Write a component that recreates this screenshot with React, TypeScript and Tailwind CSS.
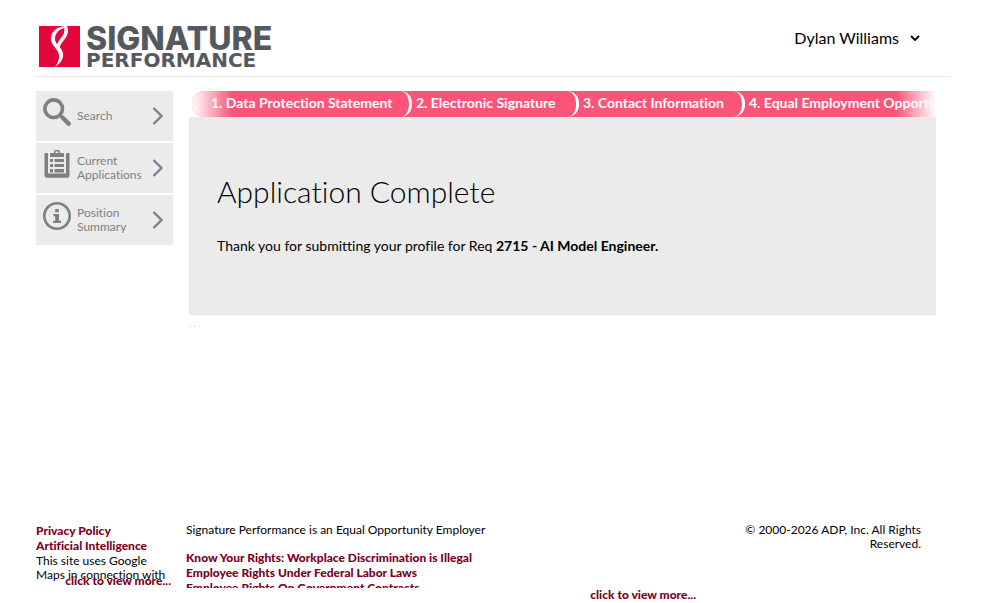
import React from 'react';

const linkClass = 'font-black text-[#7d0022] hover:underline';

const ChevronRight = () => (
  <svg className="h-5 w-3 shrink-0" viewBox="0 0 12 20" fill="none" stroke="#7b8090" strokeWidth="2.4">
    <path d="M1.5 2l8 8-8 8" />
  </svg>
);

const SearchIcon = () => (
  <svg className="h-7 w-7" viewBox="0 0 28 28" fill="none" stroke="#808080">
    <circle cx="10.7" cy="10.7" r="8.8" strokeWidth="3.6" />
    <path d="M17 17l3 3" strokeWidth="3" />
    <path d="M19.5 19.5l6.2 6.2" strokeWidth="4.4" strokeLinecap="round" />
  </svg>
);

const ClipboardIcon = () => (
  <svg className="h-7 w-7" viewBox="0 0 28 28" fill="#808080">
    <path d="M1.5 3H5v20.5h18V3h3.5v22.2a2.5 2.5 0 0 1-2.5 2.5H4a2.5 2.5 0 0 1-2.5-2.5z" />
    <path fillRule="evenodd" d="M7 7V3h4V1.5Q11 0 12.5 0h3Q17 0 17 1.5V3h4v4zM12.5 3h3V1.5h-3z" />
    <path d="M7 9h3v3H7zM11.5 9H21v3h-9.5zM7 14h3v3H7zM11.5 14H21v3h-9.5zM7 19h3v3.500H7zM11.5 19H21v3.500h-9.5z" />
  </svg>
);

const InfoIcon = () => (
  <svg className="h-7 w-7" viewBox="0 0 28 28" fill="#808080">
    <circle cx="14" cy="14" r="12.7" fill="none" stroke="#808080" strokeWidth="2.6" />
    <path d="M12.2 7h3.6v3.2h-3.6zM10.5 12h5.5v6.8h2V21h-8v-2.2h2.2v-4.6h-1.7z" />
  </svg>
);

const menuItems = [
  { label: 'Search', icon: <SearchIcon /> },
  { label: 'Current Applications', icon: <ClipboardIcon /> },
  { label: 'Position Summary', icon: <InfoIcon /> },
];

const Logo = () => (
  <a href="#home" aria-label="Signature Performance" className="flex items-start gap-1.5 pl-[3px]">
    <svg className="h-[41px] w-[41px]" viewBox="0 0 41 41">
      <path d="M0 0h41v41H0z" fill="#e4063a" />
      <path
        d="M28 0C17 0 11 7 12 14c1 6 7 9 8 15 .5 4-1 8-4 12 6-4 9-9 8-14-1-6-8-8-8-14 0-6 4-10 10-11z"
        fill="#fff"
      />
      <path d="M25 1c1 5 0 7-3 11-2 3-4 5-4 7l3 3c0-4 2-5 4-8 4-5 5-9 3-14z" fill="#fff" />
    </svg>
    <span className="flex flex-col font-['Inter',sans-serif] text-[#54585f]">
      <span className="text-[32px] leading-[26px] font-extrabold">SIGNATURE</span>
      <span className="font-['DejaVu_Sans',sans-serif] text-[20px] leading-4 font-bold">PERFORMANCE</span>
    </span>
  </a>
);

const Header = () => (
  <header className="flex h-[77px] items-start justify-between border-b border-[#e8e8e8] pt-[26px] pr-[30px]">
    <Logo />
    <button type="button" className="flex items-center gap-2.5 text-[16px] leading-6">
      Dylan Williams
      <svg className="h-3 w-3" viewBox="0 0 12 12" fill="none" stroke="#000" strokeWidth="1.8">
        <path d="M2 4l4 4 4-4" />
      </svg>
    </button>
  </header>
);

const Sidebar = () => (
  <nav aria-label="Main" className="flex w-[137px] shrink-0 flex-col gap-0.5">
    {menuItems.map((item) => (
      <a key={item.label} href="#menu" className="flex h-[50px] items-center bg-[#ebebeb] pr-[9px] pl-[7px] text-[#808080]">
        <span className="pb-2">{item.icon}</span>
        <span className="ml-1.5 flex-1 text-[12px] leading-[14px]">{item.label}</span>
        <ChevronRight />
      </a>
    ))}
  </nav>
);

const Steps = () => (
  <div className="relative ml-[3px] overflow-hidden rounded-l-[13px] bg-[#fa5478]">
    <ol className="flex text-[14px] leading-6 font-bold whitespace-nowrap text-white">
      <li className="w-[220px] shrink-0 rounded-r-[12px] border-r-[3px] border-white pb-0.5 pl-[19px]">1. Data Protection Statement</li>
      <li className="w-[167px] shrink-0 rounded-r-[12px] border-r-[3px] border-white pb-0.5 pl-1">2. Electronic Signature</li>
      <li className="w-[166px] shrink-0 rounded-r-[12px] border-r-[3px] border-white pb-0.5 pl-1">3. Contact Information</li>
      <li className="shrink-0 pb-0.5 pl-1">4. Equal Employment Opportunity</li>
    </ol>
    <div className="absolute inset-y-0 left-0 w-10 bg-gradient-to-r from-white to-transparent" />
    <div className="absolute inset-y-0 right-0 w-10 bg-gradient-to-l from-white to-transparent" />
  </div>
);

const Footer = () => (
  <footer className="mt-[190px] flex items-start text-[12px] leading-[14px]">
    <div className="relative h-[65px] w-[135px] shrink-0">
      <div className="h-[58px] overflow-hidden">
        <a href="#privacy" className={`block leading-[15px] ${linkClass}`}>Privacy Policy</a>
        <a href="#ai" className={`block leading-[15px] ${linkClass}`}>Artificial Intelligence</a>
        <p className="pt-px">This site uses Google Maps in connection with</p>
      </div>
      <a href="#more" className={`absolute right-0 bottom-0 whitespace-nowrap ${linkClass}`}>click to view more...</a>
    </div>
    <div className="ml-[15px] w-[510px]">
      <div className="h-[65px] overflow-hidden">
        <p>Signature Performance is an Equal Opportunity Employer</p>
        <ul className="mt-[13px] leading-[15px]">
          <li><a href="#rights" className={linkClass}>Know Your Rights: Workplace Discrimination is Illegal</a></li>
          <li><a href="#labor" className={linkClass}>Employee Rights Under Federal Labor Laws</a></li>
          <li><a href="#contracts" className={linkClass}>Employee Rights On Government Contracts</a></li>
        </ul>
      </div>
      <a href="#more-rights" className={`block text-right ${linkClass}`}>click to view more...</a>
    </div>
    <p className="ml-auto w-[220px] pr-[30px] text-right">© 2000-2026 ADP, Inc. All Rights Reserved.</p>
  </footer>
);

const App: React.FC = () => {
  return (
    <div className="bg-white px-9 font-['Lato',sans-serif] text-black [font-variant-ligatures:none]">
      <Header />
      <div className="mt-3.5 flex items-start gap-4">
        <Sidebar />
        <main className="min-w-0 flex-1 pr-[15px]">
          <Steps />
          <section className="h-[198px] bg-[#ebebeb] px-7 pt-14">
            <h1 className="text-[30px] leading-9 font-light">Application Complete</h1>
            <p className="mt-[27px] text-[14px] leading-5">
              Thank you for submitting your profile for Req <b>2715 - AI Model Engineer.</b>
            </p>
          </section>
          <p className="text-[9px] leading-[18px] text-[#c8c8c8]">. . .</p>
        </main>
      </div>
      <Footer />
    </div>
  );
};

export default App;
